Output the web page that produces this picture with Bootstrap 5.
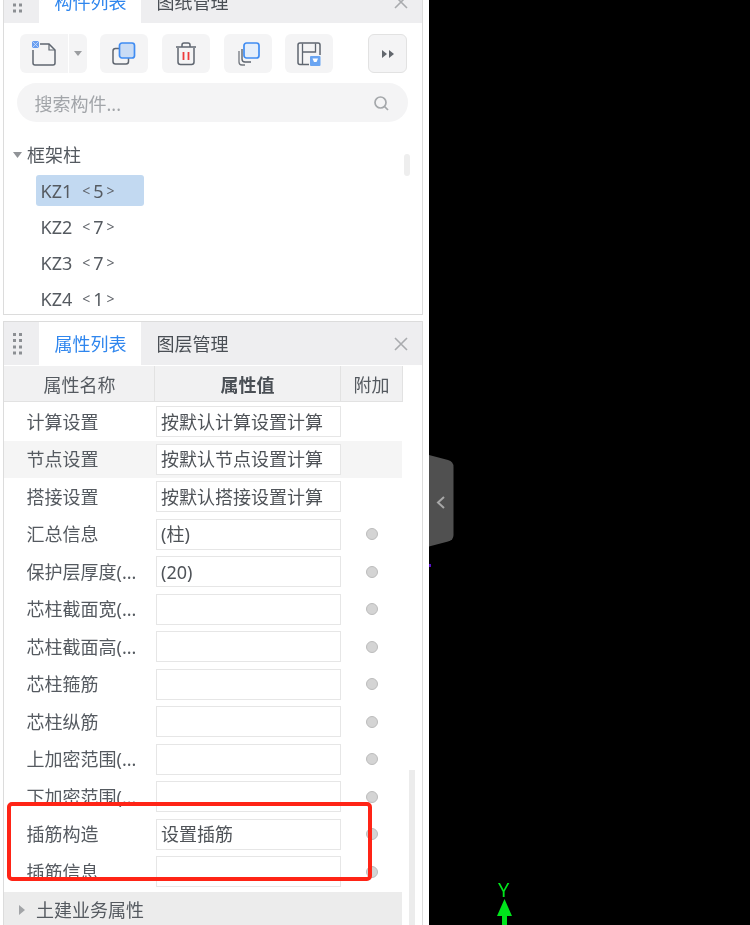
<!DOCTYPE html>
<html lang="zh">
<head>
<meta charset="utf-8">
<title>属性列表</title>
<link rel="stylesheet" href="https://cdn.jsdelivr.net/npm/bootstrap@5.3.0/dist/css/bootstrap.min.css">
<style>
html,body{height:925px;overflow:hidden;background:#000}
body{font-family:"Noto Sans","Noto Sans CJK SC",sans-serif;font-size:18px;color:#555a60;line-height:1}
.stage{height:925px;filter:blur(.35px)}
.leftside{width:429px;flex:none;background:#fff;padding:0 6px 0 3px;margin-top:-21px;height:946px;overflow:hidden}
.viewport{background:#000;position:relative}
.pane{border:1.5px solid #dcdcdc;background:#fff;position:relative;width:420px}
.pane-top{height:336px;margin-bottom:6px}
.pane-bottom{height:640px;border-bottom:0}
.tabbar{height:43px;background:#eeeef0}
.grip{width:35px;display:flex;align-items:center;justify-content:center;padding-right:7px}
.tabitem{width:102px;height:43px;display:flex;align-items:center;justify-content:center;padding-left:1px;color:#4a4f55}
.tabitem.on{background:#fff;color:#2f86ee}
.closer{margin-left:auto;margin-right:14px;width:14px;height:14px;display:block}
.tools{padding:11px 15px 0 16px;height:50px}
.toolbtn{width:48px;height:39px;background:#f4f4f5;border-radius:6px;display:flex;align-items:center;justify-content:center;flex:none}
.splitbtn{width:18px;height:39px;background:#f4f4f5;border-radius:0 6px 6px 0;margin-left:1px;margin-right:13px;display:flex;align-items:center;justify-content:center;flex:none}
.splitmain{border-radius:6px 0 0 6px;margin-right:0}
.gap14{margin-right:14px}
.gap13{margin-right:13px}
.morebtn{width:39px;height:39px;margin-left:auto;border:1.5px solid #e2e2e2;background:#f4f4f5;border-radius:6px;display:flex;align-items:center;justify-content:center;flex:none}
.searchbox{margin:10px 0 0 12.5px;width:391px;height:39px;border-radius:20px;background:#f4f4f5;padding:2px 19px 0 18px;color:#a2a5a9}
.treehead{margin-top:22px;padding-left:9px;height:22px}
.treehead svg{margin-right:5px}
.treelist{position:relative;padding-left:32px;margin-top:9px}
.treerow{height:36px;display:flex;align-items:center;padding-left:4.5px;width:108px;border-radius:3px;white-space:nowrap}
.treerow.sel{background:#c2d9f1;height:31px;margin-bottom:2.5px}
.countmark{margin-left:10px;display:inline-flex;align-items:center;gap:3px}
.countmark i{font-style:normal;font-size:14px;color:#60646a}
.thumb1{position:absolute;left:400px;top:173.5px;width:6px;height:22px;background:#eeeeee;border-radius:3px}
.headrow{height:38px;padding-top:1px}
.headcell{height:36px;padding-top:2px;background:#f1f1f2;border-right:1.5px solid #e2e2e2;border-bottom:1.5px solid #e2e2e2;display:flex;align-items:center;justify-content:center;flex:none}
.c1{width:151px;padding-left:1px}.c2{width:186px}.c3{width:62px}
.headcell.c2{font-weight:700;color:#4a4f55}
.proprow{height:37.5px;width:398px;display:flex;align-items:center}
.proprow.alt{background:#f5f5f5}
.propname{width:152px;padding-left:22.5px;flex:none;white-space:nowrap}
.propval{width:185px;height:31px;background:#fff;border:1.5px solid #e6e6e6;padding-left:4px;display:flex;align-items:center;flex:none;white-space:nowrap;color:#4f5358}
.dotcell{flex:1;display:flex;justify-content:center}
.dotmark{width:12px;height:12px;border-radius:50%;background:#d4d4d4;border:1px solid #bcbcbc}
.groupbar{height:36px;width:398px;background:#ececec;margin-top:1px;display:flex;align-items:center;padding-left:15px}
.groupbar svg{margin-right:11px}
.thumb2{position:absolute;left:405px;top:448px;width:6px;height:170px;background:#ececec}
.redbox{position:absolute;left:7px;top:802px;width:365px;height:79px;border:4px solid #ff2416;border-radius:5px;z-index:5}
.handle{position:absolute;left:0;top:455px}
.speck{position:absolute;left:0;top:564px;width:2px;height:3px;background:#5a12c8}
.axis{position:absolute;left:69px;top:880px;color:#00e51c;font-size:20px;line-height:1}
.axisarrow{position:absolute;left:68px;top:899px}
</style>
</head>
<body>
<div class="stage d-flex">
  <aside class="leftside">
    <section class="pane pane-top">
      <div class="tabbar d-flex align-items-center">
        <div class="grip"><svg width="10" height="22" viewBox="0 0 10 22" fill="#8c8f93"><rect x="0" y="0" width="3" height="3"/><rect x="6" y="0" width="3" height="3"/><rect x="0" y="6" width="3" height="3"/><rect x="6" y="6" width="3" height="3"/><rect x="0" y="12.500" width="3" height="3"/><rect x="6" y="12.500" width="3" height="3"/><rect x="0" y="18.500" width="3" height="3"/><rect x="6" y="18.500" width="3" height="3"/></svg></div>
        <div class="tabitem on">构件列表</div>
        <div class="tabitem">图纸管理</div>
        <svg class="closer" viewBox="0 0 14 14" stroke="#a9abae" stroke-width="1.6"><path d="M1 1L13 13M13 1L1 13"/></svg>
      </div>
      <div class="tools d-flex">
        <div class="toolbtn splitmain"><svg width="26" height="26" viewBox="0 0 26 26" fill="none"><path d="M9 3H18L24 9V22a2 2 0 0 1-2 2H4a2 2 0 0 1-2-2V9" stroke="#5f6670" stroke-width="1.5"/><path d="M18 3V9H24" stroke="#5f6670" stroke-width="1.2"/><rect x="1" y="0" width="7" height="7" fill="#6a9ff0"/><path d="M1 0L8 7M8 0L1 7" stroke="#cfe0fa" stroke-width=".8"/></svg></div>
        <div class="splitbtn"><svg width="8" height="5" viewBox="0 0 8 5" fill="#9b9da0"><path d="M0 0H8L4 5Z"/></svg></div>
        <div class="toolbtn gap14"><svg width="24" height="24" viewBox="0 0 24 24" fill="none"><rect x="1" y="6.500" width="15.500" height="15.500" rx="2.500" stroke="#5f6670" stroke-width="1.500"/><rect x="7.500" y="1" width="15" height="15" rx="2.500" fill="#c9dcf5" stroke="#3f8cf2" stroke-width="1.700"/></svg></div>
        <div class="toolbtn gap14"><svg width="22" height="24" viewBox="0 0 22 24" fill="none"><path d="M3 6V20a2.500 2.500 0 0 0 2.500 2.500H16.500A2.500 2.500 0 0 0 19 20V6M1 5H21M7 5V3a2 2 0 0 1 2-2H13a2 2 0 0 1 2 2V5" stroke="#5f6670" stroke-width="1.500"/><path d="M8.500 10V18M13.500 10V18" stroke="#ee3b3b" stroke-width="1.800"/></svg></div>
        <div class="toolbtn gap13"><svg width="24" height="24" viewBox="0 0 24 24" fill="none"><path d="M3 9V20a3 3 0 0 0 3 3H9" stroke="#73787f" stroke-width="1.300"/><path d="M6 7V17a3 3 0 0 0 3 3H15" stroke="#5f6670" stroke-width="1.400"/><rect x="8" y="1" width="15" height="15" rx="2.500" fill="#e4eefb" stroke="#3f8cf2" stroke-width="1.700"/></svg></div>
        <div class="toolbtn"><svg width="24" height="24" viewBox="0 0 24 24" fill="none"><path d="M12 22.500H3a2 2 0 0 1-2-2V3a2 2 0 0 1 2-2H21a2 2 0 0 1 2 2V13" stroke="#5f6670" stroke-width="1.500"/><path d="M5.500 22V1.500M5.500 10H18.500V1.500" stroke="#5f6670" stroke-width="1.300"/><rect x="13" y="14" width="10.500" height="10" rx="1" fill="#6aa5f2"/><path d="M15.500 16.500H21L19.500 20H17Z" fill="#fff"/></svg></div>
        <div class="morebtn"><svg width="12" height="8" viewBox="0 0 12 8" fill="#62676d"><path d="M0 0L5 4L0 8ZM7 0L12 4L7 8Z"/></svg></div>
      </div>
      <div class="searchbox d-flex align-items-center justify-content-between">
        <span>搜索构件...</span>
        <svg width="15" height="15" viewBox="0 0 15 15" fill="none" stroke="#a5a8ab" stroke-width="1.700"><circle cx="6.500" cy="6.500" r="5.500"/><path d="M10.500 10.500L14 14"/></svg>
      </div>
      <div class="treehead d-flex align-items-center"><svg width="9" height="6" viewBox="0 0 9 6" fill="#909397"><path d="M0 0H9L4.500 6Z"/></svg><span>框架柱</span></div>
      <div class="treelist">
        <div class="treerow sel">KZ1<span class="countmark"><i>&lt;</i>5<i>&gt;</i></span></div>
        <div class="treerow">KZ2<span class="countmark"><i>&lt;</i>7<i>&gt;</i></span></div>
        <div class="treerow">KZ3<span class="countmark"><i>&lt;</i>7<i>&gt;</i></span></div>
        <div class="treerow">KZ4<span class="countmark"><i>&lt;</i>1<i>&gt;</i></span></div>
      </div>
      <div class="thumb1"></div>
    </section>
    <section class="pane pane-bottom">
      <div class="tabbar d-flex align-items-center">
        <div class="grip"><svg width="10" height="22" viewBox="0 0 10 22" fill="#8c8f93"><rect x="0" y="0" width="3" height="3"/><rect x="6" y="0" width="3" height="3"/><rect x="0" y="6" width="3" height="3"/><rect x="6" y="6" width="3" height="3"/><rect x="0" y="12.500" width="3" height="3"/><rect x="6" y="12.500" width="3" height="3"/><rect x="0" y="18.500" width="3" height="3"/><rect x="6" y="18.500" width="3" height="3"/></svg></div>
        <div class="tabitem on">属性列表</div>
        <div class="tabitem">图层管理</div>
        <svg class="closer" viewBox="0 0 14 14" stroke="#a9abae" stroke-width="1.6"><path d="M1 1L13 13M13 1L1 13"/></svg>
      </div>
      <div class="headrow d-flex">
        <div class="headcell c1">属性名称</div>
        <div class="headcell c2">属性值</div>
        <div class="headcell c3">附加</div>
      </div>
      <div class="proprow"><div class="propname">计算设置</div><div class="propval">按默认计算设置计算</div></div>
      <div class="proprow alt"><div class="propname">节点设置</div><div class="propval">按默认节点设置计算</div></div>
      <div class="proprow"><div class="propname">搭接设置</div><div class="propval">按默认搭接设置计算</div></div>
      <div class="proprow"><div class="propname">汇总信息</div><div class="propval">(柱)</div><div class="dotcell"><div class="dotmark"></div></div></div>
      <div class="proprow"><div class="propname">保护层厚度(...</div><div class="propval">(20)</div><div class="dotcell"><div class="dotmark"></div></div></div>
      <div class="proprow"><div class="propname">芯柱截面宽(...</div><div class="propval"></div><div class="dotcell"><div class="dotmark"></div></div></div>
      <div class="proprow"><div class="propname">芯柱截面高(...</div><div class="propval"></div><div class="dotcell"><div class="dotmark"></div></div></div>
      <div class="proprow"><div class="propname">芯柱箍筋</div><div class="propval"></div><div class="dotcell"><div class="dotmark"></div></div></div>
      <div class="proprow"><div class="propname">芯柱纵筋</div><div class="propval"></div><div class="dotcell"><div class="dotmark"></div></div></div>
      <div class="proprow"><div class="propname">上加密范围(...</div><div class="propval"></div><div class="dotcell"><div class="dotmark"></div></div></div>
      <div class="proprow"><div class="propname">下加密范围(...</div><div class="propval"></div><div class="dotcell"><div class="dotmark"></div></div></div>
      <div class="proprow"><div class="propname">插筋构造</div><div class="propval">设置插筋</div><div class="dotcell"><div class="dotmark"></div></div></div>
      <div class="proprow"><div class="propname">插筋信息</div><div class="propval"></div><div class="dotcell"><div class="dotmark"></div></div></div>
      <div class="groupbar"><svg width="6" height="10" viewBox="0 0 6 10" fill="#a2a4a7"><path d="M0 0L6 5L0 10Z"/></svg><span>土建业务属性</span></div>
      <div class="thumb2"></div>
    </section>
  </aside>
  <main class="viewport flex-grow-1">
    <svg class="handle" width="25" height="92" viewBox="0 0 25 92"><path d="M0 0L19 5Q24.500 6.500 24.500 12V80Q24.500 85 19 86.500L0 91.500Z" fill="#505050"/><path d="M15 42L9 47.500L15 53" fill="none" stroke="#a8a8a8" stroke-width="2"/></svg>
    <div class="speck"></div>
    <div class="axis">Y</div>
    <svg class="axisarrow" width="16" height="26" viewBox="0 0 16 26"><path d="M7.500 0L15 17H10V26H5V17H0Z" fill="#00e51c"/></svg>
  </main>
</div>
<div class="redbox"></div>
<script src="https://cdn.jsdelivr.net/npm/bootstrap@5.3.0/dist/js/bootstrap.bundle.min.js"></script>
</body>
</html>
